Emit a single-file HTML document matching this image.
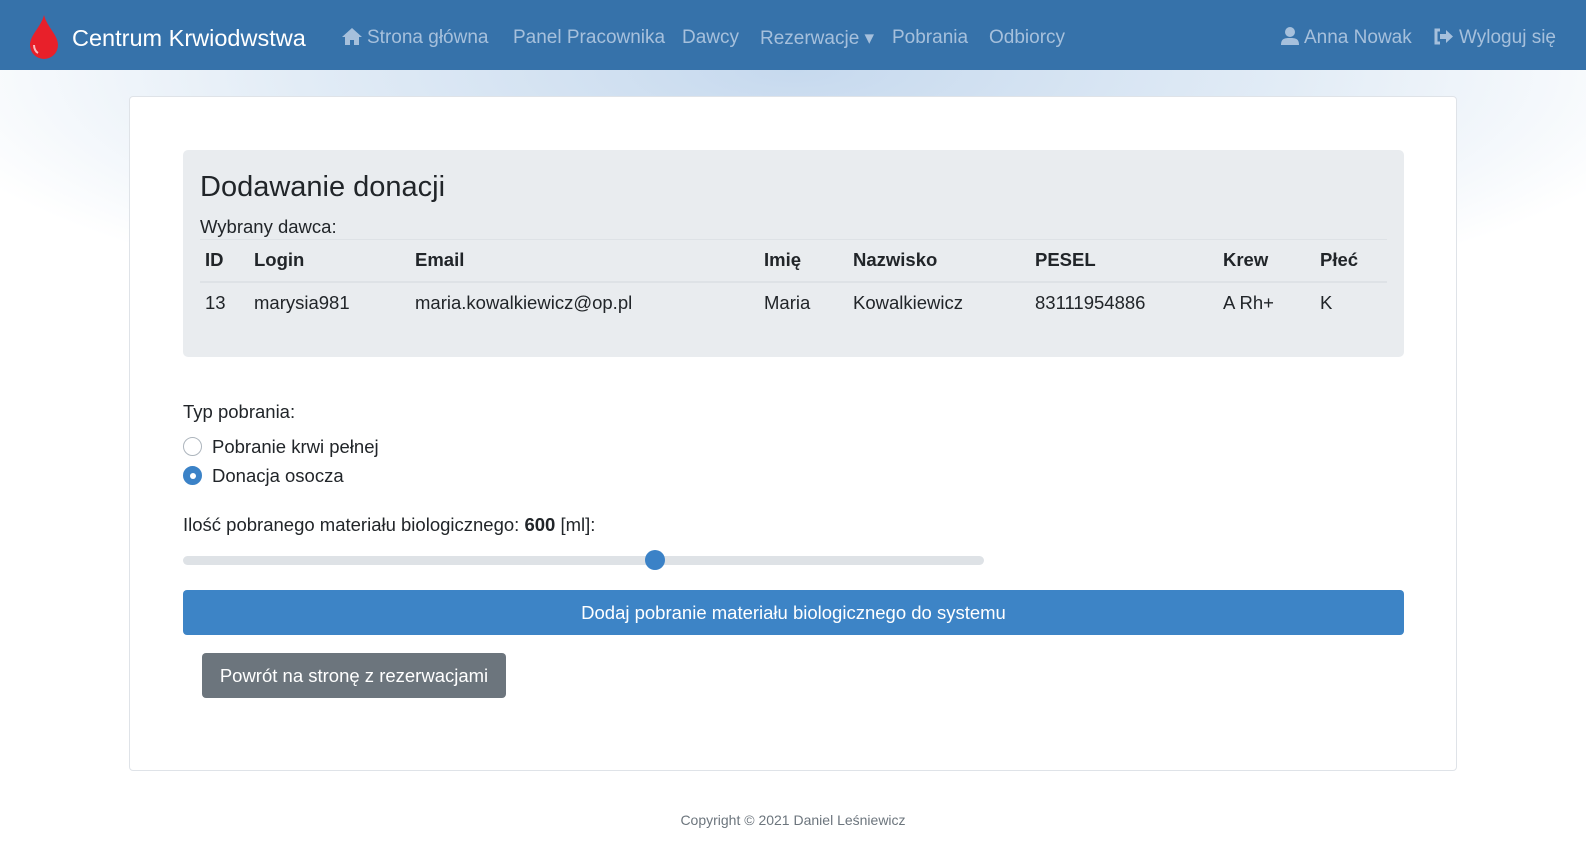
<!DOCTYPE html>
<html><head><meta charset="utf-8"><style>
*{box-sizing:border-box;margin:0;padding:0}
body{width:1586px;height:842px;overflow:hidden;font-family:"Liberation Sans",sans-serif;color:#212529;font-size:18.5px;
background:radial-gradient(ellipse 900px 260px at 795px 70px,#c6d9ee 0%,#e2ecf6 55%,#fff 100%);}
nav{height:70px;background:#3672aa;position:relative;color:#a6c0dc;font-size:19px}
nav span{position:absolute;top:27px;white-space:nowrap}
.brand{color:#fff;font-size:23.5px;top:25px!important;left:72px}
.card{position:absolute;left:129px;top:96px;width:1328px;height:675px;background:#fff;border:1px solid #dfe3e8;border-radius:4px}
.jum{position:absolute;left:53px;top:53px;width:1221px;height:207px;background:#e9ecef;border-radius:5px}
h1{position:absolute;left:17px;top:21px;font-size:29px;font-weight:500}
.wd{position:absolute;left:17px;top:66px}
table{position:absolute;left:17px;top:89px;width:1187px;border-collapse:collapse}
th,td{text-align:left;padding:0 5px;white-space:nowrap}
th{height:42px;border-top:1px solid #dee2e6;border-bottom:2px solid #dee2e6}
td{height:42px}
.abs{position:absolute;white-space:nowrap}
.radio{position:absolute;width:19px;height:19px;border-radius:50%;border:1px solid #adb5bd;background:#fff}
.radio.on{background:#3b82c7;border-color:#3b82c7}
.radio.on::after{content:"";position:absolute;left:5.5px;top:5.5px;width:6px;height:6px;border-radius:50%;background:#fff}
.btn1{position:absolute;left:53px;top:493px;width:1221px;height:45px;background:#3d84c6;color:#fff;border-radius:4px;text-align:center;line-height:45px}
.btn2{position:absolute;left:72px;top:556px;width:304px;height:45px;background:#6c757d;color:#fff;border-radius:4px;text-align:center;line-height:45px}
</style></head><body>
<nav>
<svg style="position:absolute;left:28px;top:15px" width="32" height="44" viewBox="0 0 32 44"><path d="M16 0C13 12 2 20 2 30a14 14 0 0 0 28 0C30 20 19 12 16 0z" fill="#e8202a"/><path d="M6 30c0 4 2 7 4 8" stroke="#fff" stroke-width="2" fill="none" opacity=".7"/></svg>
<span class="brand">Centrum Krwiodwstwa</span>
<svg style="position:absolute;left:342px;top:28px" width="20" height="17" viewBox="0 0 20 17"><path d="M10 0L0 9h3v8h5v-5h4v5h5V9h3z" fill="#a6c0dc"/></svg>
<span style="left:367px">Strona główna</span>
<span style="left:513px">Panel Pracownika</span>
<span style="left:682px">Dawcy</span>
<span style="left:760px">Rezerwacje ▾</span>
<span style="left:892px">Pobrania</span>
<span style="left:989px">Odbiorcy</span>
<svg style="position:absolute;left:1281px;top:27px" width="18" height="18" viewBox="0 0 18 18"><circle cx="9" cy="5" r="5" fill="#a6c0dc"/><path d="M0 18c0-6 3-7 9-7s9 1 9 7z" fill="#a6c0dc"/></svg>
<span style="left:1304px">Anna Nowak</span>
<svg style="position:absolute;left:1433px;top:28px" width="21" height="17" viewBox="0 0 21 17"><path d="M7 2H3v13h4" stroke="#a6c0dc" stroke-width="3" fill="none"/><path d="M7 6h6V2l7 6.5-7 6.5v-4H7z" fill="#a6c0dc"/></svg>
<span style="left:1459px">Wyloguj się</span>
</nav>
<div class="card">
<div class="jum">
<h1>Dodawanie donacji</h1>
<div class="wd">Wybrany dawca:</div>
<table><tr><th style="width:49px">ID</th><th style="width:161px">Login</th><th style="width:349px">Email</th><th style="width:89px">Imię</th><th style="width:182px">Nazwisko</th><th style="width:188px">PESEL</th><th style="width:97px">Krew</th><th>Płeć</th></tr>
<tr><td>13</td><td>marysia981</td><td>maria.kowalkiewicz@op.pl</td><td>Maria</td><td>Kowalkiewicz</td><td>83111954886</td><td>A Rh+</td><td>K</td></tr></table>
</div>
<div class="abs" style="left:53px;top:304px">Typ pobrania:</div>
<div class="radio" style="left:53px;top:340px"></div><div class="abs" style="left:82px;top:339px">Pobranie krwi pełnej</div>
<div class="radio on" style="left:53px;top:369px"></div><div class="abs" style="left:82px;top:368px">Donacja osocza</div>
<div class="abs" style="left:53px;top:417px">Ilość pobranego materiału biologicznego: <b>600</b> [ml]:</div>
<div class="abs" style="left:53px;top:459px;width:801px;height:9px;border-radius:5px;background:#dee2e6"></div>
<div class="abs" style="left:515px;top:453px;width:20px;height:20px;border-radius:50%;background:#3b82c7"></div>
<div class="btn1">Dodaj pobranie materiału biologicznego do systemu</div>
<div class="btn2">Powrót na stronę z rezerwacjami</div>
</div>
<div class="abs" style="left:0;width:1586px;top:812px;text-align:center;font-size:14px;color:#6c757d">Copyright © 2021 Daniel Leśniewicz</div>
</body></html>
